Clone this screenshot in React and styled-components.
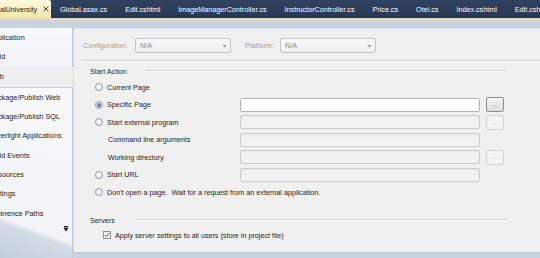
import React from "react";
import styled, { createGlobalStyle } from "styled-components";

const Global = createGlobalStyle`
  html, body { margin: 0; padding: 0; }
  body {
    background: #cad4e0;
    font-family: "Liberation Sans", Arial, sans-serif;
    overflow: hidden;
  }
`;

const Screen = styled.div`
  width: 540px;
  height: 258px;
  overflow: hidden;
  display: flex;
  flex-direction: column;
  background: #c9d3df;
  font-size: 7.2px;
  color: #1b1b1b;
`;

/* ---------- document tabs ---------- */
const TabBar = styled.div`
  height: 18px;
  flex: none;
  display: flex;
  align-items: stretch;
  background: linear-gradient(#30425f, #283956);
  white-space: nowrap;
`;

const ActiveTab = styled.div`
  width: 51px;
  flex: none;
  box-sizing: border-box;
  display: flex;
  align-items: center;
  gap: 6px;
  background: linear-gradient(#fdf8dc, #f3e7a9);
  color: #1e1e1e;
  border-radius: 0 2px 0 0;
`;

const Tab = styled.div`
  display: flex;
  align-items: center;
  padding: 0 9px;
  color: #ffffff;
  &:first-of-type { margin-left: -6px; }
`;

const TabStrip = styled.div`
  height: 4px;
  flex: none;
  background: linear-gradient(#e2ddc9, #d6d4cb);
`;

/* ---------- body ---------- */
const Body = styled.div`
  flex: 1;
  display: flex;
  align-items: flex-start;
  margin-top: 5px;
  min-height: 0;
`;

const Sidebar = styled.div`
  width: 73px;
  flex: none;
  align-self: stretch;
  display: flex;
  flex-direction: column;
  overflow: hidden;
  font-size: 7.3px;
`;

const NavBox = styled.div`
  box-sizing: border-box;
  border-top: 1px solid #c8cfd9;
  border-right: 1px solid #c2cad5;
  background: ${(p) =>
    p.$fade
      ? "linear-gradient(200deg, #f7f8fa 0%, #f1f3f6 79%, #d3dbe5 82%, #c3cedb 100%)"
      : "linear-gradient(#f7f8fa, #f0f2f5)"};
  ${(p) => (p.$fade ? "flex: 1;" : "")}
`;

const NavItem = styled.div`
  height: 19.3px;
  display: flex;
  align-items: center;
  white-space: nowrap;
  color: #1e1e1e;
  background: ${(p) => (p.$selected ? "#efefef" : "transparent")};
  ${(p) => (p.$selected ? "height: 20px;" : "")}
`;

const NavText = styled.span`
  margin-left: -11px;
`;

const ScrollHint = styled.div`
  height: 12px;
  display: flex;
  align-items: center;
  justify-content: flex-end;
  padding-right: 3px;
`;

const Panel = styled.div`
  flex: 1;
  height: 225px;
  margin-top: 1px;
  box-sizing: border-box;
  background: #f0f0f0;
  border-left: 1px solid #d6dbe2;
  border-top: 1px solid #e0e4ea;
  border-bottom: 1px solid #bcc6d2;
  border-top-left-radius: 3px;
  padding: 9px 0 0 9px;
  display: flex;
  flex-direction: column;
`;

const ConfigRow = styled.div`
  height: 15px;
  display: flex;
  align-items: center;
`;

const DimLabel = styled.span`
  width: ${(p) => p.$w}px;
  flex: none;
  color: #a3a3a3;
  ${(p) => (p.$gap ? `margin-left: ${p.$gap}px;` : "")}
`;

const Select = styled.div`
  width: 96px;
  height: 15px;
  box-sizing: border-box;
  border: 1px solid #c6c6c6;
  border-radius: 2px;
  background: linear-gradient(#f8f8f8, #efefef);
  display: flex;
  align-items: center;
  justify-content: space-between;
  padding: 0 3px 0 4px;
  color: #8a8a8a;
`;

const Etched = styled.div`
  height: 1px;
  background: #d3d3d3;
  border-bottom: 1px solid #fbfbfb;
`;

const TopRule = styled(Etched)`
  margin: 7px 0 0 -2px;
`;

const Group = styled.div`
  width: 417px;
  margin-left: 7px;
  display: flex;
  flex-direction: column;
  margin-top: ${(p) => p.$top}px;
`;

const GroupHead = styled.div`
  height: 10px;
  display: flex;
  align-items: center;
  color: #2a2a2a;
`;

const GroupTitle = styled.span`
  width: ${(p) => p.$w}px;
  flex: none;
`;

const GroupRule = styled(Etched)`
  flex: 1;
  margin-top: -1px;
`;

const OptionGrid = styled.div`
  display: grid;
  grid-template-columns: 139px 240px 18px;
  grid-auto-rows: 17.5px;
  column-gap: 6px;
  align-items: center;
  margin: 2.25px 0 0 5px;
`;

const Option = styled.label`
  display: flex;
  align-items: center;
  gap: 4px;
  white-space: pre;
  color: #1e1e1e;
  padding-left: ${(p) => (p.$indent ? 13 : 0)}px;
  grid-column: ${(p) => (p.$wide ? "1 / -1" : "1")};
`;

const Radio = styled.span`
  width: 8px;
  height: 8px;
  box-sizing: border-box;
  border-radius: 50%;
  border: 1px solid #979a9e;
  background: radial-gradient(circle at 40% 35%, #ffffff, #dcdde0);
  display: flex;
  align-items: center;
  justify-content: center;
  &::after {
    content: "";
    width: 4px;
    height: 4px;
    border-radius: 50%;
    background: ${(p) => (p.$on ? "radial-gradient(circle at 40% 35%, #6d9cc4, #21486e)" : "transparent")};
  }
`;

const Field = styled.div`
  grid-column: 2;
  height: 14px;
  box-sizing: border-box;
  border-radius: 2px;
  border: 1px solid ${(p) => (p.$enabled ? "#b2b4b8" : "#cbcbcb")};
  background: ${(p) => (p.$enabled ? "#ffffff" : "linear-gradient(#ebebeb, #f2f2f2 30%)")};
`;

const Browse = styled.div`
  grid-column: 3;
  height: 15px;
  box-sizing: border-box;
  border-radius: 2px;
  border: 1px solid ${(p) => (p.$enabled ? "#8e8e8e" : "#d3d3d3")};
  background: ${(p) => (p.$enabled ? "linear-gradient(#f6f6f6, #e6e6e6 50%, #dcdcdc)" : "#f3f3f3")};
  color: ${(p) => (p.$enabled ? "#666" : "#bbb")};
  font-size: 6px;
  display: flex;
  align-items: center;
  justify-content: center;
  line-height: 1;
`;

const CheckRow = styled.label`
  height: 17.5px;
  display: flex;
  align-items: center;
  gap: 4px;
  padding-left: 13px;
  margin-top: 1.25px;
  color: #1e1e1e;
  white-space: nowrap;
`;

const CheckBox = styled.span`
  width: 8px;
  height: 8px;
  box-sizing: border-box;
  border: 1px solid #8f9296;
  background: linear-gradient(135deg, #e9e9e9, #ffffff);
  display: flex;
  align-items: center;
  justify-content: center;
`;

const tabs = [
  "Global.asax.cs",
  "Edit.cshtml",
  "ImageManagerController.cs",
  "InstructorController.cs",
  "Price.cs",
  "Otel.cs",
  "Index.cshtml",
  "Edit.cshtml",
];

const Arrow = () => (
  <svg width="6" height="6" viewBox="0 0 6 6">
    <rect x="1" y="0" width="4" height="1.5" fill="#222" />
    <path d="M0.5 2 L5.5 2 L3 5.5 Z" fill="#222" />
  </svg>
);

export default function App() {
  return (
    <>
      <Global />
      <Screen>
        <TabBar>
          <ActiveTab>
            <span>alUniversity</span>
            <svg width="6" height="6" viewBox="0 0 6 6">
              <path d="M0.5 0.5 L5.5 5.5 M5.5 0.5 L0.5 5.5" stroke="#333" strokeWidth="0.9" />
            </svg>
          </ActiveTab>
          {tabs.map((t, i) => (
            <Tab key={i}>{t}</Tab>
          ))}
        </TabBar>
        <TabStrip />
        <Body>
          <Sidebar>
            <NavBox>
              <NavItem><NavText>Application</NavText></NavItem>
              <NavItem><NavText>Build</NavText></NavItem>
            </NavBox>
            <NavItem $selected><NavText>Web</NavText></NavItem>
            <NavBox $fade>
              <NavItem><NavText>Package/Publish Web</NavText></NavItem>
              <NavItem><NavText>Package/Publish SQL</NavText></NavItem>
              <NavItem><NavText>Silverlight Applications</NavText></NavItem>
              <NavItem><NavText>Build Events</NavText></NavItem>
              <NavItem><NavText>Resources</NavText></NavItem>
              <NavItem><NavText>Settings</NavText></NavItem>
              <NavItem><NavText>Reference Paths</NavText></NavItem>
              <ScrollHint><Arrow /></ScrollHint>
            </NavBox>
          </Sidebar>
          <Panel>
            <ConfigRow>
              <DimLabel $w={52}>Configuration:</DimLabel>
              <Select>
                <span>N/A</span>
                <svg width="5" height="4" viewBox="0 0 5 4"><path d="M0.5 1 L4.5 1 L2.5 3.5 Z" fill="#9a9a9a" /></svg>
              </Select>
              <DimLabel $w={35} $gap={14}>Platform:</DimLabel>
              <Select>
                <span>N/A</span>
                <svg width="5" height="4" viewBox="0 0 5 4"><path d="M0.5 1 L4.5 1 L2.5 3.5 Z" fill="#9a9a9a" /></svg>
              </Select>
            </ConfigRow>
            <TopRule />
            <Group $top={4}>
              <GroupHead>
                <GroupTitle $w={55}>Start Action</GroupTitle>
                <GroupRule />
              </GroupHead>
              <OptionGrid>
                <Option><Radio />Current Page</Option>
                <Option><Radio $on />Specific Page</Option>
                <Field $enabled />
                <Browse $enabled>...</Browse>
                <Option><Radio />Start external program</Option>
                <Field />
                <Browse>...</Browse>
                <Option $indent>Command line arguments</Option>
                <Field />
                <Option $indent>Working directory</Option>
                <Field />
                <Browse>...</Browse>
                <Option><Radio />Start URL</Option>
                <Field />
                <Option $wide><Radio />{"Don't open a page.  Wait for a request from an external application."}</Option>
              </OptionGrid>
            </Group>
            <Group $top={14.25}>
              <GroupHead>
                <GroupTitle $w={46}>Servers</GroupTitle>
                <GroupRule />
              </GroupHead>
              <CheckRow>
                <CheckBox>
                  <svg width="6" height="6" viewBox="0 0 6 6">
                    <path d="M0.8 3.2 L2.4 4.8 L5.3 0.8" stroke="#4a4a4a" strokeWidth="0.9" fill="none" />
                  </svg>
                </CheckBox>
                Apply server settings to all users (store in project file)
              </CheckRow>
            </Group>
          </Panel>
        </Body>
      </Screen>
    </>
  );
}
